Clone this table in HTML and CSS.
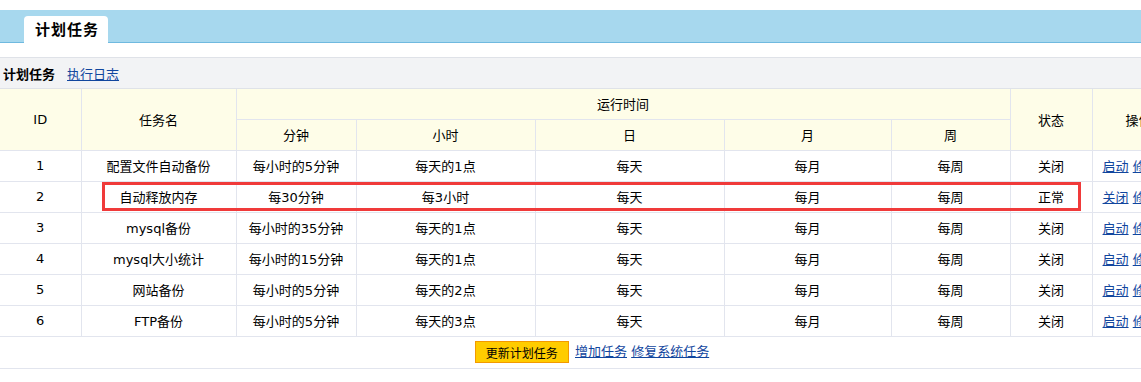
FILE: index.html
```html
<!DOCTYPE html>
<html lang="zh-CN">
<head>
<meta charset="utf-8">
<title>计划任务</title>
<link rel="stylesheet" href="styles.css">
</head>
<body>
<div class="topbar">
  <div class="tab">计划任务</div>
</div>
<div class="toolbar">
  <b class="cur">计划任务</b>
  <a href="#" class="link">执行日志</a>
</div>
<div class="tablewrap">
<table class="grid">
  <colgroup>
    <col class="c-id"><col class="c-name"><col class="c-min"><col class="c-hour"><col class="c-day"><col class="c-month"><col class="c-week"><col class="c-state"><col class="c-op">
  </colgroup>
  <thead>
    <tr class="h1">
      <th rowspan="2" class="first">ID</th>
      <th rowspan="2">任务名</th>
      <th colspan="5">运行时间</th>
      <th rowspan="2">状态</th>
      <th rowspan="2" class="op">操作</th>
    </tr>
    <tr class="h2">
      <th>分钟</th><th>小时</th><th>日</th><th>月</th><th>周</th>
    </tr>
  </thead>
  <tbody>
    <tr><td class="first">1</td><td>配置文件自动备份</td><td>每小时的5分钟</td><td>每天的1点</td><td>每天</td><td>每月</td><td>每周</td><td>关闭</td><td class="op"><a href="#" class="link">启动</a> <a href="#" class="link">修改</a></td></tr>
    <tr><td class="first">2</td><td>自动释放内存</td><td>每30分钟</td><td>每3小时</td><td>每天</td><td>每月</td><td>每周</td><td>正常</td><td class="op"><a href="#" class="link">关闭</a> <a href="#" class="link">修改</a></td></tr>
    <tr><td class="first">3</td><td>mysql备份</td><td>每小时的35分钟</td><td>每天的1点</td><td>每天</td><td>每月</td><td>每周</td><td>关闭</td><td class="op"><a href="#" class="link">启动</a> <a href="#" class="link">修改</a></td></tr>
    <tr><td class="first">4</td><td>mysql大小统计</td><td>每小时的15分钟</td><td>每天的1点</td><td>每天</td><td>每月</td><td>每周</td><td>关闭</td><td class="op"><a href="#" class="link">启动</a> <a href="#" class="link">修改</a></td></tr>
    <tr><td class="first">5</td><td>网站备份</td><td>每小时的5分钟</td><td>每天的2点</td><td>每天</td><td>每月</td><td>每周</td><td>关闭</td><td class="op"><a href="#" class="link">启动</a> <a href="#" class="link">修改</a></td></tr>
    <tr><td class="first">6</td><td>FTP备份</td><td>每小时的5分钟</td><td>每天的3点</td><td>每天</td><td>每月</td><td>每周</td><td>关闭</td><td class="op"><a href="#" class="link">启动</a> <a href="#" class="link">修改</a></td></tr>
    <tr class="foot"><td colspan="9" class="first"><button class="btn">更新计划任务</button> <a href="#" class="link">增加任务</a> <a href="#" class="link">修复系统任务</a></td></tr>
  </tbody>
</table>
<div class="mark"></div>
</div>
</body>
</html>
```
FILE: styles.css
```css
html, body {
  margin: 0;
  padding: 0;
  overflow: hidden;
  background: #fff;
}
body {
  font-family: "DejaVu Sans", "Noto Sans CJK SC", sans-serif;
  font-size: 13px;
  color: #000;
}
.topbar {
  margin-top: 10px;
  height: 32px;
  background: #a7d8ee;
  border-bottom: 1px solid #6fb9df;
  display: flex;
  align-items: flex-end;
  padding-left: 24px;
}
.tab {
  background: #fff;
  width: 73px;
  height: 27px;
  padding-left: 11px;
  margin-bottom: -1px;
  border-radius: 4px 4px 0 0;
  font-weight: bold;
  font-size: 15px;
  line-height: 29px;
  letter-spacing: 1px;
}
.toolbar {
  margin-top: 14px;
  height: 30px;
  background: #f2f3f5;
  border-top: 1px solid #dfe2e8;
  border-bottom: 1px solid #dfe2e8;
  display: flex;
  align-items: center;
  gap: 12px;
  padding-left: 3px;
}
.cur {
  font-weight: bold;
}
.link {
  color: #11469e;
  text-decoration: underline;
}
.tablewrap {
  position: relative;
}
.grid {
  border-collapse: collapse;
  table-layout: fixed;
  width: 1184px;
}
.c-id { width: 81px; }
.c-name { width: 155px; }
.c-min { width: 120px; }
.c-hour { width: 179px; }
.c-day { width: 189px; }
.c-month { width: 167px; }
.c-week { width: 119px; }
.c-state { width: 82px; }
.c-op { width: 92px; }
.grid th, .grid td {
  border: 1px solid #e2e5ee;
  text-align: center;
  padding: 0;
  white-space: nowrap;
  overflow: hidden;
  font-size: 13px;
}
.grid th {
  background: #fefde8;
  font-weight: normal;
}
.grid .first {
  border-left: none;
}
.grid thead tr.h1 th {
  border-top: none;
}
.grid tr.h1 { height: 30px; }
.grid tr.h2 { height: 31px; }
.grid tbody tr { height: 31px; }
.grid td.op {
  text-align: left;
  padding-left: 10px;
}
.grid th.op {
  text-align: left;
  padding-left: 33px;
}
.grid tr.foot { height: 32px; }
.grid tr.foot td {
  border-left: none;
  border-right: none;
}
.btn {
  font: inherit;
  font-size: 12px;
  color: #000;
  background: #ffcc00;
  border: 1px solid #f39a00;
  height: 22px;
  width: 94px;
  padding: 0;
  margin-right: 2px;
  vertical-align: middle;
}
.mark {
  position: absolute;
  left: 102px;
  top: 93px;
  width: 973px;
  height: 23px;
  border: 3px solid #f03a3a;
}
```
